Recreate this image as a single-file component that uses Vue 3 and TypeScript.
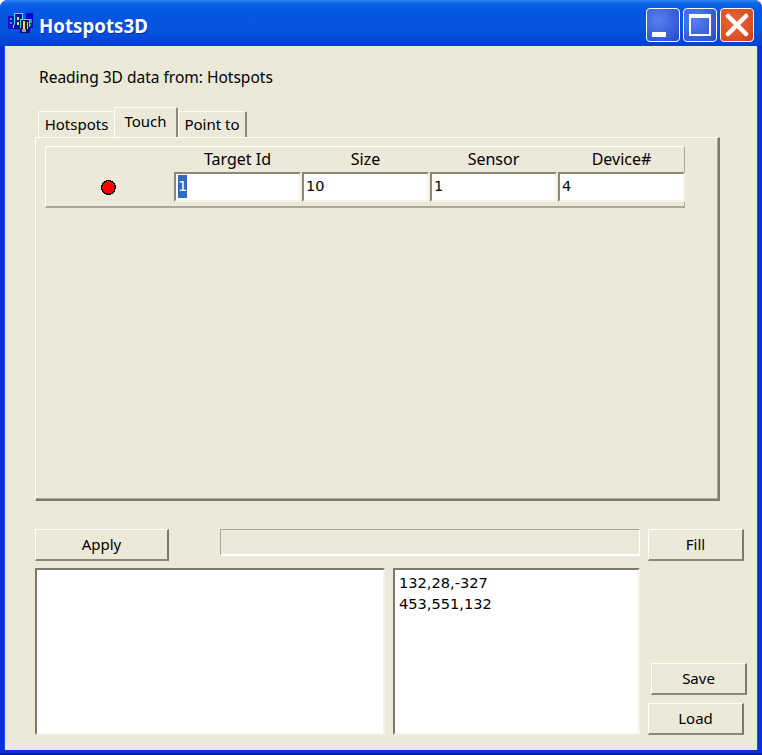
<script setup lang="ts">
const headers: string[] = ['Target Id', 'Size', 'Sensor', 'Device#']
const values: string[] = ['1', '10', '1', '4']
</script>

<template>
  <div class="window">
    <header class="titlebar">
      <svg class="app-icon" width="25" height="20" viewBox="0 0 25 20" shape-rendering="crispEdges">
        <rect x="0" y="3" width="10" height="13" fill="#1515c8" />
        <rect x="2" y="5" width="2" height="2" fill="#8a6cf0" />
        <rect x="2" y="9" width="2" height="2" fill="#8a6cf0" />
        <rect x="5" y="12" width="2" height="3" fill="#e8e040" />
        <rect x="18" y="0" width="7" height="15" fill="#0000d0" />
        <rect x="21" y="6" width="3" height="4" fill="#20a090" />
        <rect x="18" y="11" width="5" height="2" fill="#209070" />
        <rect x="6" y="0" width="9" height="16" fill="#101090" />
        <rect x="6" y="0" width="9" height="1" fill="#30e8f8" />
        <rect x="6" y="0" width="1" height="12" fill="#30e8f8" />
        <rect x="14" y="0" width="1" height="6" fill="#30e8f8" />
        <rect x="9" y="4" width="2" height="3" fill="#e8e040" />
        <rect x="9" y="9" width="2" height="3" fill="#e8e040" />
        <rect x="12" y="6" width="10" height="14" fill="#10106a" />
        <rect x="12" y="6" width="10" height="1" fill="#30e8f8" />
        <rect x="12" y="6" width="1" height="9" fill="#30e8f8" />
        <rect x="21" y="6" width="1" height="8" fill="#30e8f8" />
        <rect x="15" y="8" width="2" height="8" fill="#e8e040" />
        <rect x="14" y="16" width="4" height="3" fill="#9a9aa8" />
        <rect x="19" y="9" width="1" height="7" fill="#e8e040" />
      </svg>
      <span class="title">Hotspots3D</span>
      <div class="controls">
        <button class="ctl ctl-blue" type="button" aria-label="Minimize"><span class="min-glyph"></span></button>
        <button class="ctl ctl-blue" type="button" aria-label="Maximize"><span class="max-glyph"></span></button>
        <button class="ctl ctl-red" type="button" aria-label="Close">
          <svg width="24" height="24" viewBox="0 0 24 24">
            <path d="M3 3 L21 21 M21 3 L3 21" stroke="#fff" stroke-width="4.5" stroke-linecap="round" />
          </svg>
        </button>
      </div>
    </header>

    <main class="client">
      <p class="status">Reading 3D data from: Hotspots</p>

      <div class="tabs">
        <div class="tab tab-first">Hotspots</div>
        <div class="tab tab-active">Touch</div>
        <div class="tab tab-last">Point to</div>
      </div>

      <section class="panel">
        <div class="row">
          <div class="dot-cell">
            <svg width="15" height="15" viewBox="0 0 15 15" shape-rendering="crispEdges">
              <circle cx="7.5" cy="7.5" r="6.8" fill="#f00" stroke="#000" stroke-width="1.2" />
            </svg>
          </div>
          <div class="fields">
            <div v-for="h in headers" :key="h" class="head">{{ h }}</div>
            <div v-for="(v, i) in values" :key="i" class="field">
              <span :class="{ selected: i === 0 }">{{ v }}</span>
            </div>
          </div>
        </div>
      </section>

      <div class="actions">
        <button class="btn btn-apply" type="button">Apply</button>
        <div class="progress"></div>
        <button class="btn btn-side" type="button">Fill</button>
      </div>

      <div class="lists">
        <div class="box box-left"></div>
        <div class="box box-right">132,28,-327<br />453,551,132</div>
        <div class="side">
          <button class="btn btn-side btn-save" type="button">Save</button>
          <button class="btn btn-side" type="button">Load</button>
        </div>
      </div>
    </main>
  </div>
</template>

<style>
html, body { margin: 0; background: #fff; }
</style>

<style scoped>
.window {
  width: 762px;
  height: 755px;
  display: flex;
  flex-direction: column;
  box-sizing: border-box;
  border-radius: 8px 8px 0 0;
  overflow: hidden;
  background: #0831d9;
  box-shadow: inset 0 -2px 0 #001ea0;
  font-family: "Noto Sans", "DejaVu Sans", sans-serif;
  font-size: 15px;
  color: #000;
}
.titlebar {
  height: 46px;
  flex: none;
  display: flex;
  align-items: flex-start;
  box-sizing: border-box;
  padding: 8px 8px 0 8px;
  background: linear-gradient(180deg, #2f86f5 0, #0b63e8 4px, #0458e2 10px, #0453e0 30px, #0347d6 40px, #0340cf 46px);
}
.app-icon { flex: none; margin: 5px 6px 0 0; }
.title {
  color: #fff;
  font-family: "Noto Sans", sans-serif;
  font-weight: 700;
  font-size: 18.7px;
  line-height: 24px;
  margin-top: 6px;
  text-shadow: 1px 1px 0 #0a2f9f;
}
.controls { margin-left: auto; display: flex; gap: 3px; }
.ctl {
  width: 34px;
  height: 34px;
  padding: 0;
  box-sizing: border-box;
  border: 1px solid #fff;
  border-radius: 4px;
  position: relative;
  display: flex;
  align-items: center;
  justify-content: center;
}
.ctl-blue { background: radial-gradient(circle at 35% 35%, #5a80ec, #2f57d8 75%, #2346c4); }
.ctl-red { background: radial-gradient(circle at 40% 40%, #e8653a, #d94f22 70%, #c23a14); }
.min-glyph {
  width: 14px;
  height: 5px;
  background: #fff;
  position: absolute;
  left: 5px;
  bottom: 4px;
}
.max-glyph {
  width: 22px;
  height: 22px;
  box-sizing: border-box;
  border: 2px solid #fff;
  border-top-width: 4px;
}
.client {
  flex: 1;
  margin: 0 5px 5px;
  background: #ece9d8;
  box-shadow: -1px 0 0 #1450ea, 1px 0 0 #1450ea;
  padding: 0 0 0 30px;
  display: flex;
  flex-direction: column;
}
.status {
  margin: 21px 0 0 4px;
  height: 20px;
  line-height: 20px;
  font-size: 15.5px;
}
.tabs {
  display: flex;
  align-items: flex-end;
  height: 30px;
  margin: 20px 0 0 3px;
}
.tab {
  box-sizing: border-box;
  height: 26px;
  line-height: 25px;
  text-align: center;
  border-top: 1px solid #fff;
  border-left: 1px solid #fff;
  border-right: 2px solid #8b887a;
  border-radius: 2px 2px 0 0;
}
.tab-first { width: 76px; border-right: none; }
.tab-active { width: 64px; height: 30px; line-height: 27px; }
.tab-last { width: 69px; }
.panel {
  width: 685px;
  height: 364px;
  box-sizing: border-box;
  border-top: 1px solid #fff;
  border-left: 1px solid #fff;
  border-right: 2px solid #7d7a6c;
  border-bottom: 2px solid #7d7a6c;
  box-shadow: inset -1px -1px 0 #aca899;
  padding: 8px 0 0 9px;
}
.row {
  width: 640px;
  height: 62px;
  box-sizing: border-box;
  border-top: 1px solid #fff;
  border-left: 1px solid #fff;
  border-right: 1px solid #aca899;
  border-bottom: 2px solid #aca899;
  display: flex;
}
.dot-cell {
  width: 128px;
  flex: none;
  display: flex;
  justify-content: center;
  padding: 33px 4px 0 0;
  box-sizing: border-box;
}
.dot-cell svg { display: block; }
.fields {
  display: grid;
  grid-template-columns: repeat(4, 127px);
  grid-template-rows: 25px 30px;
  column-gap: 1px;
}
.head { text-align: center; line-height: 25px; font-size: 16px; }
.field {
  box-sizing: border-box;
  background: #fff;
  border-top: 2px solid #8b887a;
  border-left: 2px solid #8b887a;
  border-right: 2px solid #f5f3ea;
  border-bottom: 2px solid #f5f3ea;
  padding: 1px 0 0 2px;
  font-family: "DejaVu Sans", sans-serif;
  font-size: 14.5px;
  line-height: 23px;
}
.selected {
  display: inline-block;
  width: 9px;
  background: #316ac5;
  color: #fff;
}
.actions {
  margin-top: 28px;
  display: flex;
  align-items: flex-start;
}
.btn {
  font: inherit;
  color: #000;
  padding: 0 0 2px;
  background: #ece9d8;
  box-sizing: border-box;
  height: 32px;
  border-top: 1px solid #fff;
  border-left: 1px solid #fff;
  border-right: 2px solid #7d7a6c;
  border-bottom: 2px solid #8b887a;
}
.btn-apply { width: 134px; margin-right: 51px; }
.progress {
  width: 420px;
  height: 27px;
  box-sizing: border-box;
  border-top: 1px solid #aca899;
  border-left: 1px solid #aca899;
  border-right: 1px solid #fff;
  border-bottom: 2px solid #fff;
  margin-right: 8px;
}
.btn-side { width: 96px; }
.lists {
  margin-top: 7px;
  display: flex;
  height: 167px;
  gap: 8px;
}
.box {
  box-sizing: border-box;
  background: #fff;
  border-top: 2px solid #7d7a6c;
  border-left: 2px solid #7d7a6c;
  border-right: 2px solid #f5f3ea;
  border-bottom: 2px solid #f5f3ea;
}
.box-left { width: 350px; }
.box-right {
  width: 247px;
  padding: 2px 0 0 4px;
  line-height: 21px;
  font-family: "DejaVu Sans", sans-serif;
  font-size: 14.6px;
}
.side {
  display: flex;
  flex-direction: column;
  justify-content: flex-end;
  gap: 8px;
}
.btn-save { margin-left: 3px; }
</style>
